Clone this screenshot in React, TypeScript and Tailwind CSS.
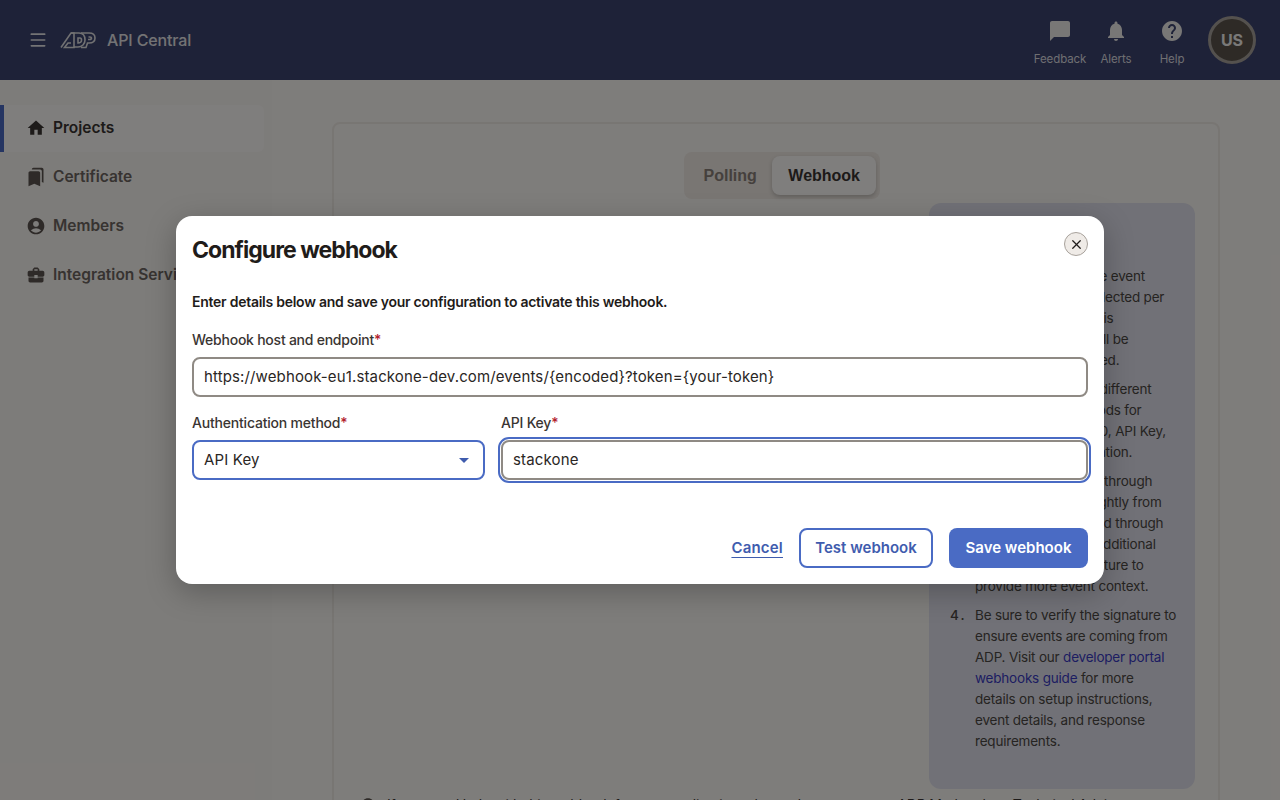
import React from 'react';
import { Menu, X } from 'lucide-react';
import { MdHome, MdBookmarks, MdAccountCircle, MdBusinessCenter, MdChatBubble, MdNotifications, MdHelp, MdArrowDropDown, MdInfo } from 'react-icons/md';

const font = "font-['Inter','Noto_Sans',sans-serif]";

const navItems = [
  { label: 'Projects', icon: MdHome, active: true },
  { label: 'Certificate', icon: MdBookmarks, active: false },
  { label: 'Members', icon: MdAccountCircle, active: false },
  { label: 'Integration Services', icon: MdBusinessCenter, active: false },
];

const headerActions = [
  { label: 'Feedback', icon: MdChatBubble },
  { label: 'Alerts', icon: MdNotifications },
  { label: 'Help', icon: MdHelp },
];

const AdpLogo = () => (
  <svg width="36" height="18" viewBox="0 0 36 18" fill="none" stroke="currentColor" strokeWidth="1.6">
    <path d="M1 16.5 L11 2 H14 V16.5 H4.5 L8 12 H11" />
    <path d="M11 2 H19 C24 2 25 6 25 9 C25 13 22 16 18 16 H14" />
    <path d="M18 7 H20 C21 7 21.5 8 21.5 9 C21.5 11 20 12 18 12 Z" />
    <path d="M21 2 H29 C33 2 35 4 35 7 C35 10.5 32.5 12 29 12 H27.5 L26 16.5 H21" />
    <path d="M28.5 6 H30 C31 6 31.5 6.5 31.5 7 C31.5 8 30.5 8.5 29.5 8.5 H28" />
  </svg>
);

const Req = () => <span className="text-[#b3202c]">*</span>;

const Num = ({ n }: { n: number }) => (
  <span className="w-[25px] shrink-0 font-medium tracking-[2px]">{n}.</span>
);

export default function App() {
  return (
    <div className={`relative h-[800px] overflow-hidden bg-[#fdfaf6] ${font}`}>
      <header className="flex h-20 items-center justify-between bg-[#3c4470] pl-[28px] pr-6 text-white">
        <div className="flex items-center">
          <Menu size={20} strokeWidth={2} className="text-[#e8e8ea]" />
          <span className="ml-[12px] text-[#e2e2e4]"><AdpLogo /></span>
          <span className="ml-[11px] text-[16px] font-medium tracking-[-0.15px] text-[#e6e6e8]">API Central</span>
        </div>
        <div className="flex items-center">
          {headerActions.map(({ label, icon: Icon }) => (
            <div key={label} className="flex w-14 flex-col items-center pt-[6px]">
              <Icon size={24} className="text-[#f0eeec]" />
              <span className="mt-2 text-[11.5px] leading-4 tracking-[-0.1px] whitespace-nowrap text-[#dedee2]">{label}</span>
            </div>
          ))}
          <div className="ml-2 flex h-12 w-12 items-center justify-center rounded-full border-[3px] border-[#a8a29c] bg-[#5c544c] text-[16px] font-bold text-[#f5f3f0]">
            US
          </div>
        </div>
      </header>

      <div className="flex h-[720px]">
        <aside className="w-[272px] shrink-0 bg-[#fbf8f4] pt-[25px] pr-2">
          {navItems.map(({ label, icon: Icon, active }) => (
            <div
              key={label}
              className={`mb-[2px] flex h-[47px] items-center gap-[7px] rounded-r-md border-l-4 pb-[1px] pl-[22px] text-[15.5px] font-semibold whitespace-nowrap ${
                active ? 'border-[#4a6bc4] bg-[#fffdfa] text-[#3a3532]' : 'border-transparent text-[#6e6762]'
              }`}
            >
              <Icon size={20} className={active ? 'text-[#3a3532]' : 'text-[#5c5550]'} />
              {label}
            </div>
          ))}
        </aside>

        <main className="flex-1 px-[60px] pt-[42px]">
          <div className="flex h-[760px] w-[888px] flex-col rounded-lg border-2 border-[#f1ece6] pl-[25px] pr-[23px]">
            <div className="flex justify-center pt-[28px] pl-[10px]">
              <div className="flex h-[47px] items-center rounded-lg bg-[#f2ece6] p-[4px] text-[16px] font-bold font-['Liberation_Sans',sans-serif]">
                <span className="px-[15.5px] text-[#8a817a]">Polling</span>
                <span className="flex h-[39px] items-center rounded-lg bg-[#fefcfa] px-[16px] text-[#3a3532] shadow-[0_2px_4px_rgba(0,0,0,0.2)]">Webhook</span>
              </div>
            </div>
            <div className="flex justify-end">
              <div className="mt-[4px] h-[586px] w-[266px] rounded-xl bg-[#e2e3ee] pt-[63px] pl-[21px] pr-3 text-[13.5px] leading-[21px] tracking-[-0.2px] text-[#4d4844]">
                <ol className="flex flex-col gap-2">
                  <li className="flex"><Num n={1} /><span className="whitespace-nowrap">Webhooks fire on the event<br />One single URL is selected per<br />project and this URL is<br />where each event will be<br />sent when it's updated.</span></li>
                  <li className="flex"><Num n={2} /><span className="whitespace-nowrap">ADP supports three different<br />authentication methods for<br />webhooks: OAuth 2.0, API Key,<br />and Basic Authentication.</span></li>
                  <li className="flex"><Num n={3} /><span className="whitespace-nowrap">Events are delivered through<br />events may differ slightly from<br />those you've received through<br />polling and contain additional<br />details such as signature to<br />provide more event context.</span></li>
                  <li className="flex"><Num n={4} /><span className="whitespace-nowrap">Be sure to verify the signature to<br />ensure events are coming from<br />ADP. Visit our <span className="text-[#3b3bc4]">developer portal</span><br /><span className="text-[#3b3bc4]">webhooks guide</span> for more<br />details on setup instructions,<br />event details, and response<br />requirements.</span></li>
                </ol>
              </div>
            </div>
            <div className="mt-[5px] ml-[1px] flex items-center gap-[11px] text-[14px] tracking-[-0.2px] whitespace-nowrap text-[#3a3532]">
              <MdInfo size={16} className="text-[#5c5550]" />
              If you need help with this webhook for your application, please do contact your ADP Marketplace Technical Advisor
            </div>
          </div>
        </main>
      </div>

      {/* dim layer + dialog */}
      <div className="absolute inset-0 flex items-start justify-center bg-black/50 pt-[216px]">
        <div className="relative h-[368px] w-[928px] rounded-2xl bg-white px-4 text-[#1f1c1a] shadow-[0_8px_30px_rgba(0,0,0,0.25)]">
          <button className="absolute top-4 right-4 flex h-6 w-6 items-center justify-center rounded-full border border-[#a8a29c] bg-[#efebe7]">
            <X size={15} strokeWidth={2} className="text-[#1f1c1a]" />
          </button>
          <h2 className="pt-[18px] text-[23px] leading-8 font-bold tracking-[-0.95px]">Configure webhook</h2>
          <p className="mt-[26px] text-[14px] leading-5 font-semibold tracking-[-0.26px]">
            Enter details below and save your configuration to activate this webhook.
          </p>
          <label className="mt-[18px] block text-[14px] leading-5 font-medium tracking-[-0.24px] text-[#3a3532]">
            Webhook host and endpoint<Req />
          </label>
          <div className="mt-[7px] flex h-10 items-center rounded-lg border-2 border-[#8f8a84] px-[10px] text-[15px] tracking-[0.13px] text-[#2a2624]">
            {'https://webhook-eu1.stackone-dev.com/events/{encoded}?token={your-token}'}
          </div>
          <div className="mt-4 flex gap-4">
            <div className="w-[293px]">
              <label className="block text-[14px] leading-5 font-medium tracking-[-0.2px] text-[#3a3532]">
                Authentication method<Req />
              </label>
              <div className="mt-[7px] flex h-10 items-center justify-between rounded-lg border-2 border-[#4a6bc4] pl-[10px] pr-[7px] text-[15px] tracking-[0.15px] text-[#2a2624]">
                API Key
                <MdArrowDropDown size={24} className="text-[#3f5cae]" />
              </div>
            </div>
            <div className="flex-1">
              <label className="block text-[14px] leading-5 font-medium tracking-[-0.2px] text-[#3a3532]">
                API Key<Req />
              </label>
              <div className="mt-[7px] flex h-10 items-center rounded-lg border-2 border-[#8f8a84] px-[10px] text-[15px] tracking-[0.15px] text-[#2a2624] outline-2 outline-offset-1 outline-[#4a6bc4]">
                stackone
              </div>
            </div>
          </div>
          <div className="mt-[48px] flex items-center justify-end">
            <a className="text-[15px] font-semibold tracking-[0.2px] text-[#3f5cae] underline underline-offset-4">Cancel</a>
            <button className="ml-4 flex h-10 w-[134px] items-center justify-center rounded-lg border-2 border-[#4a6bc4] text-[15px] font-semibold text-[#3f5cae]">Test webhook</button>
            <button className="ml-4 flex h-10 w-[139px] items-center justify-center rounded-lg bg-[#4a6bc4] text-[15px] font-semibold text-white">Save webhook</button>
          </div>
        </div>
      </div>
    </div>
  );
}
